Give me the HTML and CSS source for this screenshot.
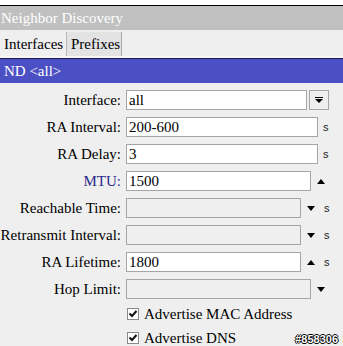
FILE: index.html
```html
<!DOCTYPE html>
<html lang="en">
<head>
    <meta charset="UTF-8">
    <title>Neighbor Discovery</title>
    <link rel="stylesheet" href="styles.css">
</head>
<body>
    <div class="window">
        <div class="title">Neighbor Discovery</div>
        <div class="tabs">
            <div class="tab active">Interfaces</div>
            <div class="tab">Prefixes</div>
        </div>
        <div class="bar">ND &lt;all&gt;</div>

        <div class="form">
            <div class="row">
                <label>Interface:</label>
                <div class="field w-181">all</div>
                <div class="drop">
                    <svg width="8" height="7" viewBox="0 0 8 7"><rect x="0" y="0" width="8" height="1" fill="#000"/><path d="M0 2 H8 L4 6 Z" fill="#000"/></svg>
                </div>
            </div>
            <div class="row">
                <label>RA Interval:</label>
                <div class="field w-192">200-600</div>
                <span class="unit">s</span>
            </div>
            <div class="row">
                <label>RA Delay:</label>
                <div class="field w-192">3</div>
                <span class="unit">s</span>
            </div>
            <div class="row">
                <label class="blue">MTU:</label>
                <div class="field w-185">1500</div>
                <span class="arrow up"></span>
            </div>
            <div class="row">
                <label>Reachable Time:</label>
                <div class="field off w-175"></div>
                <span class="arrow down"></span>
                <span class="unit">s</span>
            </div>
            <div class="row">
                <label>Retransmit Interval:</label>
                <div class="field off w-175"></div>
                <span class="arrow down"></span>
                <span class="unit">s</span>
            </div>
            <div class="row">
                <label>RA Lifetime:</label>
                <div class="field w-175">1800</div>
                <span class="arrow up"></span>
                <span class="unit">s</span>
            </div>
            <div class="row">
                <label>Hop Limit:</label>
                <div class="field off w-185"></div>
                <span class="arrow down"></span>
            </div>
        </div>

        <div class="checks">
            <div class="check">
                <svg width="12" height="12" viewBox="0 0 12 12"><rect x="0.5" y="0.5" width="11" height="11" fill="#fff" stroke="#8a8a8a"/><path d="M2.5 5.5 L5 8 L9.5 3" fill="none" stroke="#111" stroke-width="2"/></svg>
                <span>Advertise MAC Address</span>
            </div>
            <div class="check">
                <svg width="12" height="12" viewBox="0 0 12 12"><rect x="0.5" y="0.5" width="11" height="11" fill="#fff" stroke="#8a8a8a"/><path d="M2.5 5.5 L5 8 L9.5 3" fill="none" stroke="#111" stroke-width="2"/></svg>
                <span>Advertise DNS</span>
            </div>
        </div>

        <div class="stamp">#858306</div>
    </div>
</body>
</html>
```

FILE: styles.css
```css
body {
    margin: 0;
    background-color: #fff;
    font-family: "Liberation Serif", "Times New Roman", serif;
    font-size: 15px;
    color: #000;
}
.window {
    position: relative;
    margin-top: 5px;
    height: 341px;
    border-top: 1px solid #000;
    background-color: #efefef;
    overflow: hidden;
}
.title {
    height: 24px;
    line-height: 24px;
    padding-left: 1px;
    background-color: #c0c0c0;
    color: #fff;
}
.tabs {
    display: flex;
    height: 28px;
    padding-top: 2px;
    box-sizing: border-box;
    background-color: #efefef;
    border-bottom: 2px solid #f6f6f6;
}
.tab {
    padding: 0 4px;
    line-height: 24px;
}
.tab.active {
    width: 58px;
    border-right: 1px solid #b8b8b8;
}
.tab:not(.active) {
    width: 46px;
    background-color: #e3e3e3;
    border-right: 1px solid #a8a8a8;
}
.bar {
    height: 24px;
    line-height: 24px;
    padding-left: 4px;
    border-top: 1px solid #1e1e50;
    background-color: #4b4fc4;
    color: #fff;
}
.form {
    display: flex;
    flex-direction: column;
    gap: 7px;
    padding-top: 7px;
}
.row {
    display: flex;
    align-items: center;
    height: 20px;
}
.row label {
    width: 121px;
    margin-right: 5px;
    text-align: right;
    white-space: nowrap;
}
.row label.blue {
    color: #2a2a8c;
}
.field {
    height: 20px;
    line-height: 19px;
    padding-left: 2px;
    box-sizing: border-box;
    border: 1px solid #a5a5a5;
    background-color: #fff;
}
.field.off {
    background-color: #efefef;
}
.w-175 { width: 175px; }
.w-181 { width: 181px; }
.w-185 { width: 185px; }
.w-192 { width: 192px; }
.drop {
    display: flex;
    align-items: center;
    justify-content: center;
    width: 20px;
    height: 20px;
    margin-left: 2px;
    box-sizing: border-box;
    border: 1px solid #a5a5a5;
}
.unit {
    margin-left: 5px;
    font-family: "Liberation Sans", sans-serif;
    font-size: 11px;
    color: #222;
}
.arrow {
    width: 0;
    height: 0;
    margin-left: 6px;
    border-left: 4px solid transparent;
    border-right: 4px solid transparent;
}
.arrow.up {
    border-bottom: 5px solid #000;
}
.arrow.down {
    border-top: 5px solid #000;
}
.row .arrow + .unit {
    margin-left: 9px;
}
.checks {
    margin-top: 3px;
}
.check {
    display: flex;
    align-items: center;
    height: 24px;
    padding-left: 127px;
    gap: 5px;
}
.stamp {
    position: absolute;
    right: 5px;
    bottom: 2px;
    font-family: "Liberation Sans", sans-serif;
    font-size: 11px;
    font-weight: bold;
    color: #fff;
    text-shadow: 1px 0 #000, -1px 0 #000, 0 1px #000, 0 -1px #000;
}
```
